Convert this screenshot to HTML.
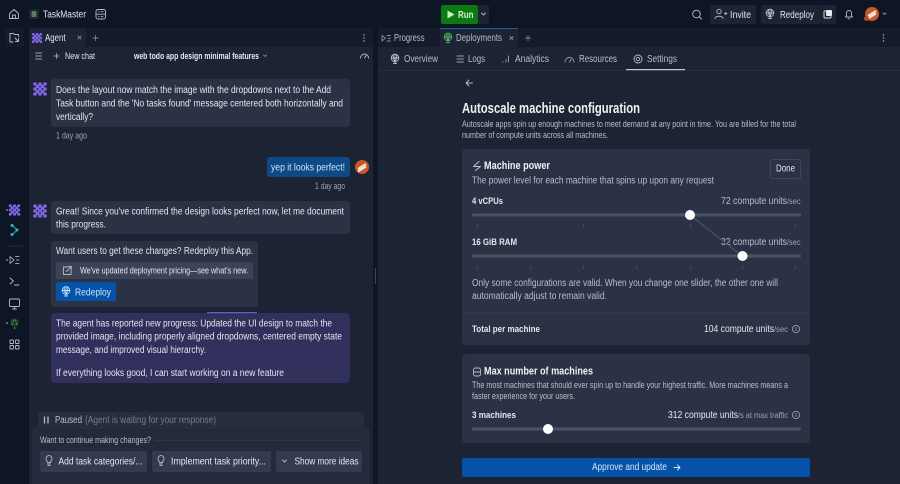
<!DOCTYPE html>
<html lang="en"><head><meta charset="utf-8"><title>TaskMaster</title>
<style>
html,body{margin:0;padding:0;background:#0e1525;width:900px;height:484px;overflow:hidden}
svg{display:block;filter:blur(.25px)}
text{font-family:"Liberation Sans",sans-serif;font-size:10px;fill:#e4e7ed;white-space:pre}
.m{fill:#9da3af}.d{fill:#b9bec8}.b{font-weight:700}
.i{fill:none;stroke:#b6bcc4;stroke-width:.9;stroke-linecap:round;stroke-linejoin:round}
</style></head><body>
<svg width="900" height="484" viewBox="0 0 900 484" xmlns="http://www.w3.org/2000/svg">
<defs>
<g id="ag" fill="#8066e6"><circle cx="-5" cy="-5" r="1.800"/><circle cx="0" cy="-5" r="1.800"/><circle cx="5" cy="-5" r="1.800"/><circle cx="-2.500" cy="-2.500" r="1.800"/><circle cx="2.500" cy="-2.500" r="1.800"/><circle cx="-5" cy="0" r="1.800"/><circle cx="0" cy="0" r="1.800"/><circle cx="5" cy="0" r="1.800"/><circle cx="-2.500" cy="2.500" r="1.800"/><circle cx="2.500" cy="2.500" r="1.800"/><circle cx="-5" cy="5" r="1.800"/><circle cx="0" cy="5" r="1.800"/><circle cx="5" cy="5" r="1.800"/></g>
<g id="gl"><circle cx="0" cy="-1" r="3.800"/><path d="M-3.800-1H3.800M0-4.800V4.500M-1.600-4.400Q-2.400-1 0 2.800Q2.400-1 1.600-4.400M-1.500 4.500H1.500"/></g>
<g id="bu"><path d="M-1.500 3H1.500M-1 4.600H1M-1.500 1.600C-1.500 .2-3-.6-3-2.400A3 3 0 0 1 3-2.400C3-.6 1.500 .2 1.500 1.600Z"/></g>
<g id="inf"><circle r="3.600"/><path d="M0-.3V1.600M0-1.700V-1.600"/></g>
<g id="av"><circle r="7" fill="#c9572a"/><path d="M-4 2 L4-3M-4 4.500 L4-.5" stroke="#f2e6de" stroke-width="2" fill="none"/></g>
</defs>

<rect width="900" height="484" fill="#0e1525"/>

<!-- panels -->
<rect x="29" y="28" width="344" height="456" fill="#1c2333"/>
<rect x="29" y="28" width="344" height="19" fill="#151b2b"/>
<rect x="29" y="28" width="57" height="19" fill="#1c2333"/>
<rect x="378" y="28" width="522" height="456" fill="#1c2333"/>
<rect x="378" y="28" width="522" height="19" fill="#151b2b"/>
<rect x="440" y="28" width="78" height="19" fill="#1c2333"/>
<rect x="440" y="28" width="78" height="1" fill="#1f5c94"/>
<rect x="378" y="70" width="522" height="1" fill="#262d3e"/>
<rect x="375" y="268" width="1" height="16" fill="#3d4454"/>

<!-- top bar -->
<g class="i"><path d="M9.500 13.500 14 9.500 18.500 13.500V18.500H9.500ZM12.500 18.500V15H15.500V18.500"/></g>
<rect x="29" y="9" width="10" height="10" rx="2" fill="#1a2a22"/><rect x="31.500" y="11" width="5" height="6" rx="1" fill="#5c7a66"/>
<text x="43" y="17.500" textLength="43" lengthAdjust="spacingAndGlyphs" style="font-size:10.500px">TaskMaster</text>
<g class="i"><rect x="96" y="9.500" width="9.500" height="9.500" rx="2"/><path d="M96 14.200H105.500M98.500 11.800H99M98.500 16.700H99M101 11.800H103M101 16.700H103"/></g>

<rect x="441" y="5" width="37" height="19" rx="2" fill="#0c7a12"/>
<rect x="478" y="5" width="11" height="19" rx="2" fill="#1c2333"/>
<path d="M447.500 10.500 454.500 14.500 447.500 18.500Z" fill="#c8f0c4"/>
<text x="458" y="18" class="b" textLength="15.500" lengthAdjust="spacingAndGlyphs" style="fill:#cdf3c9">Run</text>
<path class="i" d="M481.500 13 483.500 15 485.500 13"/>

<g class="i"><circle cx="696.500" cy="14" r="3.800"/><path d="M699.500 17 701.500 19"/></g>
<rect x="710" y="5" width="46" height="19" rx="2" fill="#1c2333"/>
<g class="i"><circle cx="719" cy="11.500" r="2.200"/><path d="M715 18.500C715 15.500 723 15.500 723 18.500M724.500 13.500H727M725.700 12.300V14.700"/></g>
<text x="730" y="18" textLength="21" lengthAdjust="spacingAndGlyphs">Invite</text>
<rect x="761" y="5" width="60" height="19" rx="2" fill="#1c2333"/>
<rect x="821" y="5" width="15" height="19" rx="2" fill="#1c2333"/>
<use href="#gl" x="770" y="14" class="i"/>
<text x="780" y="18" textLength="34" lengthAdjust="spacingAndGlyphs">Redeploy</text>
<rect x="824" y="11" width="7" height="7" rx="1" fill="none" stroke="#d8dce2"/><rect x="826" y="10" width="6" height="6" rx="1" fill="#e8eaee"/>
<g class="i"><path d="M845.500 17H852.500L851.500 15.500V13A2.500 2.500 0 0 0 846.500 13V15.500ZM848.200 18.800H849.800"/></g>
<use href="#av" x="872" y="14"/><circle cx="866.500" cy="18.500" r="2.500" fill="#b34a20"/>
<path class="i" d="M883 13 884.500 14.500 886 13" style="stroke:#8a909c"/>

<!-- left rail -->
<rect x="5" y="28" width="19" height="19" rx="2" fill="#151b2b"/>
<g class="i"><path d="M10 42V33.500H13.500L14.500 34.500H18.500V36.500M10 42H13M15 38 18.500 41.500 M15.500 41.500H18.500V38.500"/></g>
<use href="#ag" transform="translate(14.500 210) scale(.85)"/>
<circle cx="7" cy="210" r=".8" fill="#c8ccd4"/>
<path d="M12 225 17 230 12 235" fill="none" stroke="#1a8a9a" stroke-width="1.500"/><circle cx="12" cy="225.500" r="1.500" fill="#32b4c8"/><circle cx="17" cy="230" r="1.500" fill="#32b4c8"/><circle cx="12" cy="234.500" r="1.500" fill="#32b4c8"/>
<rect x="7" y="245.500" width="16" height="1" fill="#262d3e"/>
<circle cx="7" cy="260" r=".8" fill="#c8ccd4"/>
<g class="i" style="stroke:#9aa0ac"><path d="M10 256.500V263.500L14 260ZM15.500 256.500H19M16.500 260H19M15.500 263.500H19"/></g>
<g class="i"><path d="M10 278 13.500 281 10 284M14.500 285H19"/></g>
<g class="i"><rect x="9.500" y="299" width="10" height="7.500" rx="1"/><path d="M14.500 306.500V309M12.500 309H16.500"/></g>
<circle cx="7" cy="323" r=".8" fill="#c8ccd4"/>
<circle cx="14.500" cy="322.500" r="4" fill="#3f9a4e"/><use href="#gl" x="14.500" y="323.500" class="i" style="stroke:#16331e"/><path d="M14.500 327V329" stroke="#3f9a4e"/>
<g class="i"><rect x="10" y="340" width="3.500" height="3.500" rx=".5"/><rect x="15.500" y="340" width="3.500" height="3.500" rx=".5"/><rect x="10" y="345.500" width="3.500" height="3.500" rx=".5"/><rect x="15.500" y="345.500" width="3.500" height="3.500" rx=".5"/></g>

<!-- agent tab -->
<use href="#ag" transform="translate(37 38) scale(.75)"/>
<text x="45" y="41" textLength="20.500" lengthAdjust="spacingAndGlyphs">Agent</text>
<path class="i" style="stroke:#7d8492" d="M78 36 81 39M81 36 78 39M95.500 35.500V40.500M93 38H98"/>
<g fill="#b4b9c3"><circle cx="364" cy="35" r=".7"/><circle cx="364" cy="38" r=".7"/><circle cx="364" cy="41" r=".7"/></g>
<path class="i" style="stroke:#9aa0ac" d="M35.500 53H41.500M35.500 56H41.500M35.500 59H41.500M56.500 53.500V58.500M54 56H59"/>
<text x="65" y="59" textLength="30" lengthAdjust="spacingAndGlyphs" style="font-size:8.800px">New chat</text>
<text x="134" y="59" class="b" textLength="125" lengthAdjust="spacingAndGlyphs" style="font-size:8.800px">web todo app design minimal features</text>
<path class="i" style="stroke:#7d8492" d="M263.500 55 265 56.500 266.500 55"/>
<path class="i" d="M360.500 58A4 4 0 0 1 368.500 58M364.500 58 366 55.500"/>

<!-- messages -->
<use href="#ag" x="40" y="89"/>
<rect x="51" y="79" width="299" height="48" rx="3" fill="#2b3245"/>
<text x="56" y="93" textLength="275" lengthAdjust="spacingAndGlyphs">Does the layout now match the image with the dropdowns next to the Add</text>
<text x="56" y="106.500" textLength="287" lengthAdjust="spacingAndGlyphs">Task button and the 'No tasks found' message centered both horizontally and</text>
<text x="56" y="120" textLength="37" lengthAdjust="spacingAndGlyphs">vertically?</text>
<text x="56" y="138.500" class="m" textLength="31" lengthAdjust="spacingAndGlyphs" style="font-size:8.800px">1 day ago</text>

<rect x="267" y="157" width="83" height="20" rx="3" fill="#0f4a85"/>
<text x="271" y="170.500" textLength="74" lengthAdjust="spacingAndGlyphs" style="fill:#cfe4f8">yep it looks perfect!</text>
<use href="#av" x="362" y="167"/>
<text x="315" y="189" class="m" textLength="30" lengthAdjust="spacingAndGlyphs" style="font-size:8.800px">1 day ago</text>

<use href="#ag" x="40" y="211"/>
<rect x="51" y="201" width="299" height="33" rx="3" fill="#2b3245"/>
<text x="56" y="214.500" textLength="288" lengthAdjust="spacingAndGlyphs">Great! Since you've confirmed the design looks perfect now, let me document</text>
<text x="56" y="227.500" textLength="50" lengthAdjust="spacingAndGlyphs">this progress.</text>

<rect x="51" y="241" width="207" height="66" rx="3" fill="#2b3245"/>
<text x="56" y="254" textLength="197" lengthAdjust="spacingAndGlyphs">Want users to get these changes? Redeploy this App.</text>
<rect x="56" y="262" width="197" height="17" rx="2" fill="#3c4357"/>
<g class="i"><path d="M68 267H63.500V274.500H71V270M66.500 271.500 71 267M68.500 266.500H71.300V269.300"/></g>
<text x="80" y="273.500" textLength="168" lengthAdjust="spacingAndGlyphs" style="font-size:8.800px">We've updated deployment pricing—see what's new.</text>
<rect x="56" y="282" width="60" height="19" rx="2" fill="#0553a8"/>
<use href="#gl" x="66" y="291.500" class="i" style="stroke:#bcdcfa"/>
<text x="75" y="295.500" textLength="36" lengthAdjust="spacingAndGlyphs" style="fill:#cfe4f8">Redeploy</text>

<rect x="51" y="313" width="299" height="70" rx="3" fill="#312f5c"/>
<rect x="207" y="312" width="50" height="1.200" rx=".6" fill="#6a5fc0"/>
<text x="56" y="326.500" textLength="276" lengthAdjust="spacingAndGlyphs">The agent has reported new progress: Updated the UI design to match the</text>
<text x="56" y="339.500" textLength="286" lengthAdjust="spacingAndGlyphs">provided image, including properly aligned dropdowns, centered empty state</text>
<text x="56" y="353" textLength="150" lengthAdjust="spacingAndGlyphs">message, and improved visual hierarchy.</text>
<text x="56" y="376" textLength="228" lengthAdjust="spacingAndGlyphs">If everything looks good, I can start working on a new feature</text>

<!-- paused -->
<rect x="38" y="412" width="326" height="22" rx="3" fill="#262d3f"/>
<path d="M44.500 416.500V423.500M48 416.500V423.500" stroke="#b4b9c3" stroke-width="1.300"/>
<text x="55" y="423" class="d" textLength="27" lengthAdjust="spacingAndGlyphs">Paused</text>
<text x="85" y="423" class="m" textLength="131" lengthAdjust="spacingAndGlyphs" style="fill:#767d8c">(Agent is waiting for your response)</text>

<rect x="33" y="428" width="336" height="60" rx="4" fill="#232a3c" stroke="#2a3143" stroke-width=".8"/>
<text x="40" y="443" class="d" textLength="111" lengthAdjust="spacingAndGlyphs" style="font-size:8.800px">Want to continue making changes?</text>
<rect x="155" y="440" width="207" height=".8" fill="#323a4c"/>
<rect x="40" y="451" width="107" height="21" rx="2" fill="#333b50"/>
<rect x="152" y="451" width="119" height="21" rx="2" fill="#333b50"/>
<rect x="276" y="451" width="86" height="21" rx="2" fill="#333b50"/>
<use href="#bu" x="49" y="461" class="i"/>
<use href="#bu" x="161" y="461" class="i"/>
<path class="i" d="M282.500 460 284.500 462 286.500 460"/>
<text x="58.500" y="464.500" textLength="84" lengthAdjust="spacingAndGlyphs">Add task categories/...</text>
<text x="171" y="464.500" textLength="95" lengthAdjust="spacingAndGlyphs">Implement task priority...</text>
<text x="294.500" y="464.500" textLength="64" lengthAdjust="spacingAndGlyphs">Show more ideas</text>

<!-- right tabs -->
<g class="i" style="stroke:#8a909c"><path d="M382 35.500V41L385.500 38.200ZM387 35.500H390.500M388 38.200H390.500M387 41H390.500"/></g>
<text x="394" y="41" class="d" textLength="30.500" lengthAdjust="spacingAndGlyphs">Progress</text>
<use href="#gl" x="448" y="38" class="i" style="stroke:#4fae62"/>
<text x="456" y="41" class="d" textLength="46" lengthAdjust="spacingAndGlyphs">Deployments</text>
<path class="i" style="stroke:#7d8492" d="M510 36.500 513 39.500M513 36.500 510 39.500M528 35.500V40.500M525.500 38H530.500"/>
<g fill="#b4b9c3"><circle cx="883.500" cy="35" r=".7"/><circle cx="883.500" cy="38" r=".7"/><circle cx="883.500" cy="41" r=".7"/></g>

<!-- subnav -->
<use href="#gl" x="395" y="59" class="i"/>
<text x="404" y="62" class="d" textLength="34" lengthAdjust="spacingAndGlyphs">Overview</text>
<path class="i" style="stroke:#9aa0ac" d="M457 56H463.500M457 59H463.500M457 62H463.500"/>
<text x="468" y="62" class="d" textLength="17" lengthAdjust="spacingAndGlyphs">Logs</text>
<path class="i" style="stroke:#9aa0ac" d="M503 62V61.500M506 62V59.500M508.500 62V56"/>
<text x="515" y="62" class="d" textLength="34" lengthAdjust="spacingAndGlyphs">Analytics</text>
<path class="i" style="stroke:#9aa0ac" d="M565 62A4.500 4.500 0 0 1 574 62M569.500 62 571 59.500"/>
<text x="579" y="62" class="d" textLength="38" lengthAdjust="spacingAndGlyphs">Resources</text>
<g class="i"><circle cx="638" cy="59" r="1.700"/><circle cx="638" cy="59" r="4"/></g>
<text x="647" y="62" class="d" textLength="30" lengthAdjust="spacingAndGlyphs">Settings</text>
<rect x="626" y="69" width="59" height="1.200" fill="#c2c8d0"/>

<path class="i" d="M472.500 83H466.500M469 80 466 83 469 86"/>
<text x="462" y="113" class="b" textLength="178" lengthAdjust="spacingAndGlyphs" style="font-size:14.500px;fill:#f0f1f3">Autoscale machine configuration</text>
<text x="462" y="127" class="d" textLength="334" lengthAdjust="spacingAndGlyphs" style="font-size:8.800px">Autoscale apps spin up enough machines to meet demand at any point in time. You are billed for the total</text>
<text x="462" y="138" class="d" textLength="146" lengthAdjust="spacingAndGlyphs" style="font-size:8.800px">number of compute units across all machines.</text>

<!-- card 1 -->
<rect x="462" y="149" width="348" height="196" rx="4" fill="#2b3245"/>
<path class="i" d="M479 161.500 473.500 166.500H480.500L475.500 170.500" style="stroke:#c2c8d0"/>
<text x="484" y="169" class="b" textLength="66" lengthAdjust="spacingAndGlyphs" style="font-size:11px;fill:#f0f1f3">Machine power</text>
<rect x="770.500" y="159.500" width="30" height="19" rx="2" fill="none" stroke="#3f475b"/>
<text x="776" y="171.500" textLength="19" lengthAdjust="spacingAndGlyphs">Done</text>
<text x="472" y="183.500" class="d" textLength="242" lengthAdjust="spacingAndGlyphs">The power level for each machine that spins up upon any request</text>

<text x="472" y="204" class="b" textLength="31" lengthAdjust="spacingAndGlyphs" style="font-size:9.200px">4 vCPUs</text>
<text x="721" y="204" class="d" textLength="66" lengthAdjust="spacingAndGlyphs">72 compute units</text>
<text x="787" y="204" class="m" textLength="13.500" lengthAdjust="spacingAndGlyphs" style="font-size:8px">/sec</text>
<rect x="472" y="213.500" width="329" height="3" rx="1.500" fill="#4b5265"/>
<g fill="#4b5265"><rect x="477" y="224" width=".8" height="4"/><rect x="583" y="224" width=".8" height="4"/><rect x="690" y="224" width=".8" height="4"/><rect x="795" y="224" width=".8" height="4"/></g>

<text x="472" y="245" class="b" textLength="45" lengthAdjust="spacingAndGlyphs" style="font-size:9.200px">16 GiB RAM</text>
<text x="721" y="245" class="d" textLength="66" lengthAdjust="spacingAndGlyphs">32 compute units</text>
<text x="787" y="245" class="m" textLength="13.500" lengthAdjust="spacingAndGlyphs" style="font-size:8px">/sec</text>
<rect x="472" y="254.500" width="329" height="3" rx="1.500" fill="#4b5265"/>
<g fill="#4b5265"><rect x="477" y="265" width=".8" height="4"/><rect x="530" y="265" width=".8" height="4"/><rect x="583" y="265" width=".8" height="4"/><rect x="636" y="265" width=".8" height="4"/><rect x="690" y="265" width=".8" height="4"/><rect x="742" y="265" width=".8" height="4"/><rect x="795" y="265" width=".8" height="4"/></g>
<path d="M690 215 742 256" stroke="#4b5265" stroke-width="1.200"/>
<circle cx="690" cy="215" r="5" fill="#fff"/>
<circle cx="742.500" cy="256" r="5" fill="#fff"/>

<text x="472" y="286" class="d" textLength="306" lengthAdjust="spacingAndGlyphs">Only some configurations are valid. When you change one slider, the other one will</text>
<text x="472" y="299" class="d" textLength="135" lengthAdjust="spacingAndGlyphs">automatically adjust to remain valid.</text>
<rect x="462" y="312" width="348" height=".8" fill="#343b4e"/>
<text x="472" y="332" class="b" textLength="68" lengthAdjust="spacingAndGlyphs" style="font-size:9.200px">Total per machine</text>
<text x="704" y="332" textLength="70" lengthAdjust="spacingAndGlyphs">104 compute units</text>
<text x="774" y="332" class="m" textLength="14" lengthAdjust="spacingAndGlyphs" style="font-size:8px">/sec</text>
<use href="#inf" x="796" y="329" class="i" style="stroke:#9aa0ac"/>

<!-- card 2 -->
<rect x="462" y="354" width="348" height="89" rx="4" fill="#2b3245"/>
<g class="i"><rect x="473.500" y="368" width="7" height="8" rx="2"/><path d="M473.500 372H480.500"/></g>
<text x="484" y="374.500" class="b" textLength="109" lengthAdjust="spacingAndGlyphs" style="font-size:11px;fill:#f0f1f3">Max number of machines</text>
<text x="472" y="388" class="d" textLength="316" lengthAdjust="spacingAndGlyphs" style="font-size:8.800px">The most machines that should ever spin up to handle your highest traffic. More machines means a</text>
<text x="472" y="399" class="d" textLength="103" lengthAdjust="spacingAndGlyphs" style="font-size:8.800px">faster experience for your users.</text>
<text x="472" y="418" class="b" textLength="44" lengthAdjust="spacingAndGlyphs" style="font-size:9.200px">3 machines</text>
<text x="668" y="418" textLength="70" lengthAdjust="spacingAndGlyphs">312 compute units</text>
<text x="738" y="418" class="m" textLength="50" lengthAdjust="spacingAndGlyphs" style="font-size:8px">/s at max traffic</text>
<use href="#inf" x="796" y="415" class="i" style="stroke:#9aa0ac"/>
<rect x="472" y="427.500" width="329" height="3" rx="1.500" fill="#4b5265"/>
<circle cx="548" cy="429" r="5" fill="#fff"/>

<!-- approve -->
<rect x="462" y="458" width="348" height="19" rx="2" fill="#0553a8"/>
<text x="592" y="470" textLength="75" lengthAdjust="spacingAndGlyphs" style="fill:#d6e8fa">Approve and update</text>
<path class="i" style="stroke:#d6e8fa" d="M674 467.500H680M677.500 465 680 467.500 677.500 470"/>
</svg>
</body></html>
